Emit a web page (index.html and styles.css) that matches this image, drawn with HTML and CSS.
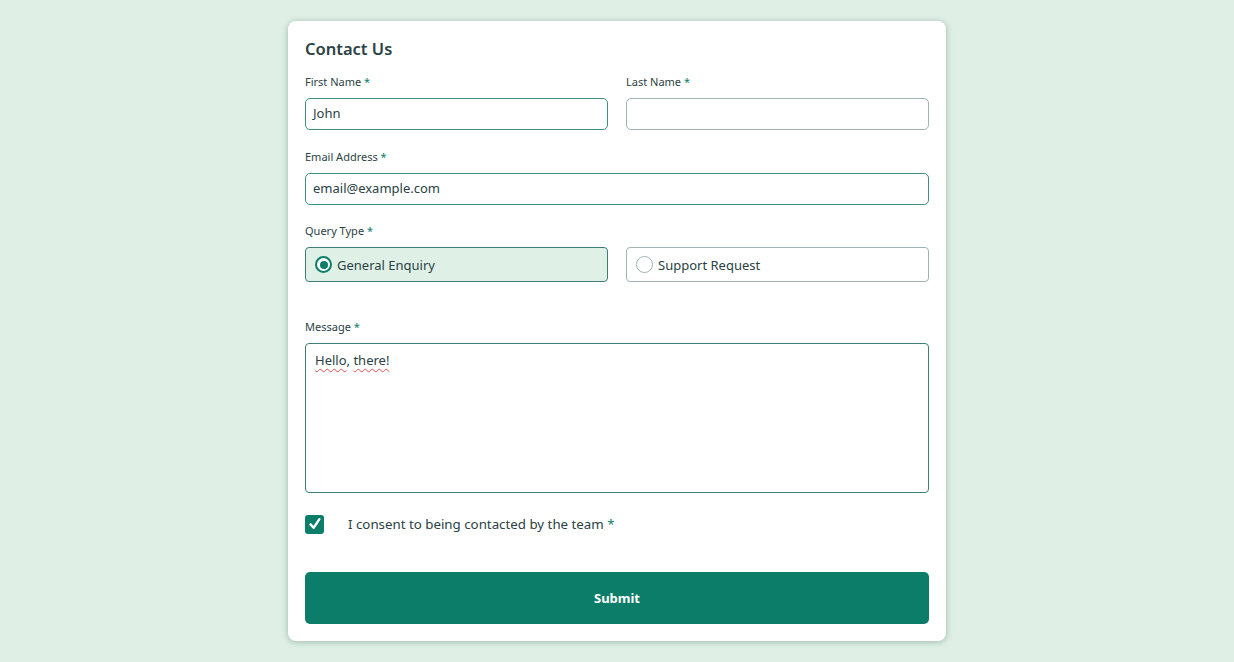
FILE: index.html
```html
<!DOCTYPE html>
<html>
<head>
<meta charset="utf-8">
<link rel="stylesheet" href="styles.css">
</head>
<body>
<main class="card">
  <h1 class="title">Contact Us</h1>
  <div class="row">
    <div class="field">
      <label class="label">First Name <span class="req">*</span></label>
      <div class="input active">John</div>
    </div>
    <div class="field">
      <label class="label">Last Name <span class="req">*</span></label>
      <div class="input"></div>
    </div>
  </div>
  <div class="field gap-email">
    <label class="label">Email Address <span class="req">*</span></label>
    <div class="input active">email@example.com</div>
  </div>
  <div class="field gap-query">
    <label class="label">Query Type <span class="req">*</span></label>
    <div class="row">
      <div class="radio selected"><span class="dot on"></span>General Enquiry</div>
      <div class="radio"><span class="dot"></span>Support Request</div>
    </div>
  </div>
  <div class="field gap-msg">
    <label class="label">Message <span class="req">*</span></label>
    <div class="textarea"><span class="spell">Hello</span>, <span class="spell">there!</span></div>
  </div>
  <div class="consent">
    <span class="check"><svg width="14" height="14" viewBox="0 0 14 14"><path d="M2.5 7.4 L5.6 10.8 L11.4 2.2" fill="none" stroke="#fff" stroke-width="2.4" stroke-linecap="round" stroke-linejoin="round"/></svg></span>
    <span class="consent-text">I consent to being contacted by the team <span class="req">*</span></span>
  </div>
  <button class="submit">Submit</button>
</main>
</body>
</html>
```
FILE: styles.css
```css
* { box-sizing: border-box; }
html, body { margin: 0; padding: 0; }
body {
  background: #dfefe5;
  font-family: "Noto Sans", sans-serif;
  color: #2a4244;
  width: 1234px;
  height: 662px;
  padding-top: 21px;
}
.card {
  width: 658px;
  height: 620px;
  margin: 0 auto 0 288px;
  background: #fff;
  border-radius: 8px;
  box-shadow: 0 1px 6px rgba(40, 80, 70, 0.35);
  padding: 17px 17px;
}
.title {
  margin: 0 0 15px 0;
  font-size: 16.5px;
  line-height: 22px;
  font-weight: 600;
  color: #2a4244;
}
.row {
  display: grid;
  grid-template-columns: 1fr 1fr;
  column-gap: 18px;
}
.field { display: flex; flex-direction: column; }
.label {
  font-size: 11px;
  line-height: 14px;
  color: #2a4244;
  margin-bottom: 9px;
}
.req { color: #0c7d69; }
.input {
  height: 32px;
  border: 1px solid #9fb3b4;
  border-radius: 5px;
  font-size: 13px;
  line-height: 29px;
  padding: 0 7px;
  color: #2a4244;
}
.input.active { border-color: #3c8f82; }
.gap-email { margin-top: 20px; }
.gap-query { margin-top: 19px; }
.gap-msg { margin-top: 38px; }
.radio {
  height: 35px;
  border: 1px solid #9fb3b4;
  border-radius: 4px;
  display: flex;
  align-items: center;
  padding-left: 9px;
  font-size: 13px;
  gap: 5px;
}
.radio.selected { background: #dff1e7; border-color: #3f7d74; }
.dot {
  width: 17px;
  height: 17px;
  border-radius: 50%;
  border: 1px solid #9fb3b4;
  background: #fff;
  display: inline-block;
  position: relative;
}
.dot.on { border: 2px solid #0c7d69; }
.dot.on::after {
  content: "";
  position: absolute;
  left: 2.5px; top: 2.5px;
  width: 8px; height: 8px;
  border-radius: 50%;
  background: #0c7d69;
}
.textarea {
  height: 150px;
  border: 1px solid #3f7d74;
  border-radius: 4px;
  font-size: 13px;
  padding: 7px 9px;
  line-height: 18px;
}
.spell {
  text-decoration: underline wavy #e05050;
  text-decoration-thickness: 1px;
  text-underline-offset: 3px;
}
.consent {
  margin-top: 21px;
  display: flex;
  align-items: center;
  height: 20px;
}
.check {
  width: 19px;
  height: 19px;
  background: #0c7d69;
  border-radius: 3px;
  display: flex;
  align-items: center;
  justify-content: center;
}
.consent-text {
  margin-left: 24px;
  font-size: 13.3px;
}
.submit {
  display: block;
  margin-top: 38px;
  width: 100%;
  height: 52px;
  border: none;
  border-radius: 5px;
  background: #0c7d69;
  color: #fff;
  font-family: "Noto Sans", sans-serif;
  font-size: 13px;
  font-weight: 700;
}
```
